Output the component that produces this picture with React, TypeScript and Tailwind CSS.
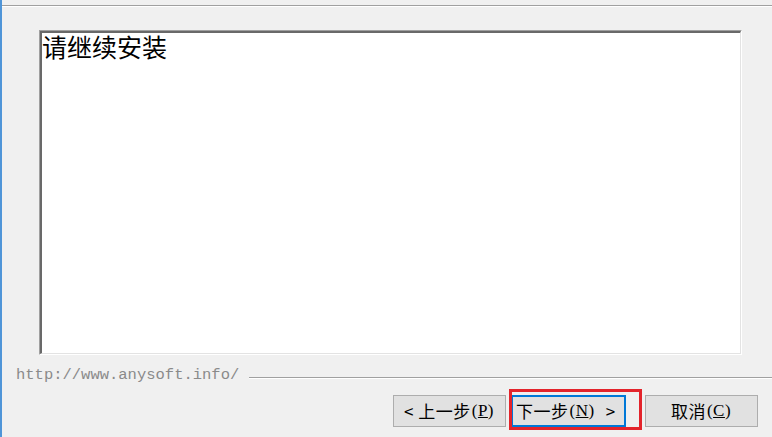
const cjk = { fontFamily: '"Noto Sans CJK SC", "Liberation Sans", sans-serif' }

function Key({ k }: { k: string }) {
  return (
    <span style={{ fontFamily: '"Liberation Serif", serif' }} className="mx-[1px]">
      (<span className="underline">{k}</span>)
    </span>
  )
}

function WizButton({
  children,
  focused = false,
  className = '',
}: {
  children: React.ReactNode
  focused?: boolean
  className?: string
}) {
  return (
    <div
      className={`h-[32px] flex items-center justify-center text-[17px] tracking-[0.5px] text-black bg-[#e1e1e1] whitespace-nowrap ${
        focused ? 'border-2 border-[#0078d7]' : 'border border-[#adadad]'
      } ${className}`}
    >
      {children}
    </div>
  )
}

export default function App() {
  return (
    <div
      className="w-[772px] h-[437px] bg-[#f0f0f0] flex overflow-hidden"
      style={cjk}
    >
      <div className="w-[2px] h-full bg-[#4f95d8]" />
      <div className="flex-1 flex flex-col">
        <div className="h-[5px]" />
        <div className="h-px bg-[#a0a0a0]" />
        <div className="h-px bg-white" />

        {/* text panel */}
        <div className="ml-[37px] mt-[23px] w-[703px] h-[325px] border-t border-l border-[#a0a0a0] border-r-white border-b-white border-r border-b">
          <div className="w-full h-full border-t-2 border-l-2 border-[#696969] border-r border-b border-r-[#e3e3e3] border-b-[#e3e3e3] bg-white">
            <div className="text-[25px] leading-[25px] text-black pt-[1px]">
              请继续安装
            </div>
          </div>
        </div>

        {/* url line */}
        <div className="mt-[11px] h-[20px] flex items-center">
          <span
            className="ml-[14px] text-[15.5px] text-[#8a8a8a] whitespace-nowrap"
            style={{ fontFamily: '"Liberation Mono", monospace' }}
          >
            http://www.anysoft.info/
          </span>
          <div className="flex-1 ml-[10px] mt-[3px] flex flex-col">
            <div className="h-px bg-[#a0a0a0]" />
            <div className="h-px bg-white" />
          </div>
        </div>

        {/* buttons */}
        <div className="mt-[9px] flex items-center">
          <WizButton className="ml-[391px] w-[113px]">
            &lt;&nbsp;上一步<Key k="P" />
          </WizButton>
          <div className="relative ml-[5px]">
            <WizButton focused className="w-[115px] justify-start pl-[3px]">
              下一步<Key k="N" />
              <span className="ml-[10px]">&gt;</span>
            </WizButton>
            <div className="absolute left-[-2px] top-[-6px] w-[133px] h-[41px] border-[3px] border-[#e3242b] pointer-events-none" />
          </div>
          <WizButton className="ml-[19px] w-[113px]">
            取消<Key k="C" />
          </WizButton>
        </div>
      </div>
    </div>
  )
}
